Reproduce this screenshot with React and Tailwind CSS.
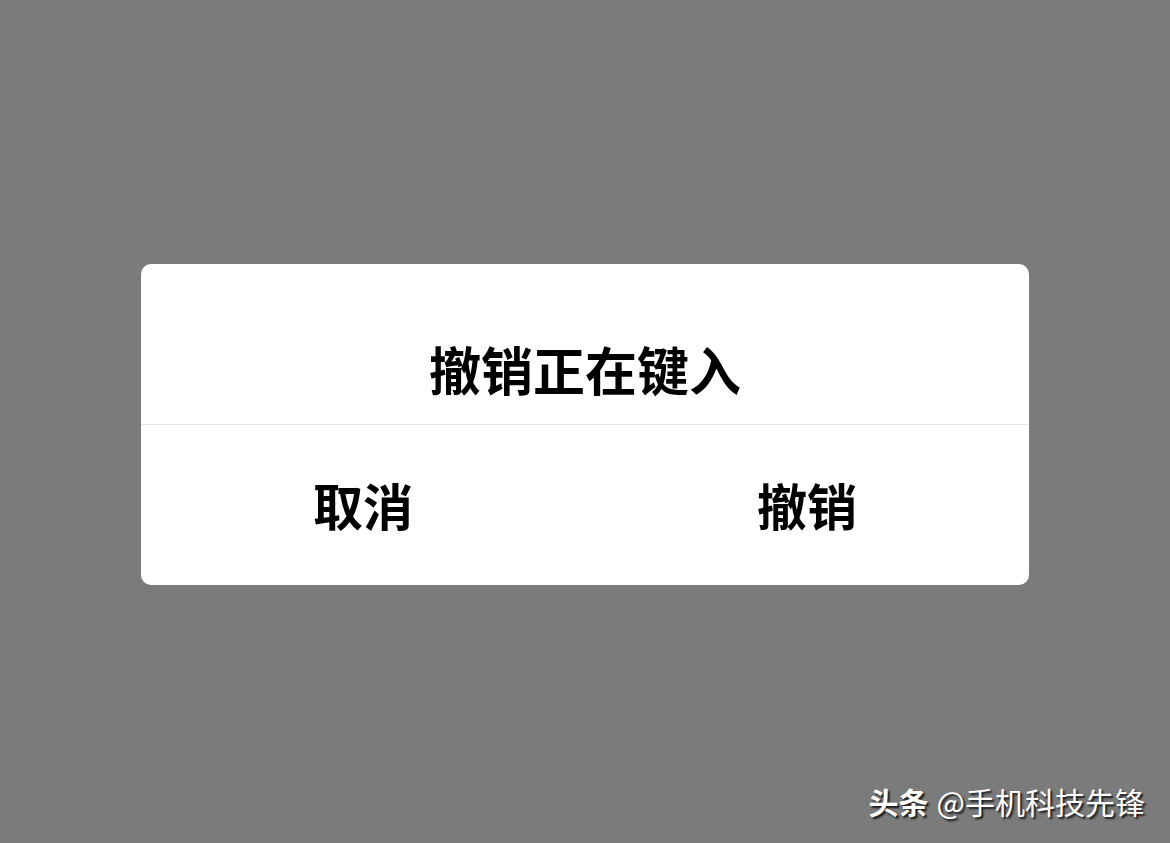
export default function App() {
    const cjk = { fontFamily: '"Noto Sans CJK SC", "Noto Sans", sans-serif' };

    return (
        <div className="relative w-[1170px] h-[843px] bg-[#7b7b7b] overflow-hidden" style={cjk}>
            {/* 撤销确认弹窗 */}
            <div className="flex h-full flex-col items-center pt-[264px]">
                <div className="w-[888px] rounded-[10px] bg-white overflow-hidden">
                    <div className="flex h-[161px] items-center justify-center border-b border-[#e6e6e6] pt-[50px]">
                        <h1 className="text-[52px] font-bold leading-none text-black">撤销正在键入</h1>
                    </div>
                    <div className="grid h-[160px] grid-cols-2">
                        <button className="flex items-center justify-center pb-[2px] text-[50px] font-bold leading-none text-black">取消</button>
                        <button className="flex items-center justify-center pb-[2px] text-[50px] font-bold leading-none text-black">撤销</button>
                    </div>
                </div>
            </div>

            {/* 水印 */}
            <div className="absolute right-[25px] bottom-[27px] flex items-baseline text-[30px] leading-none text-white [text-shadow:2px_2px_2px_rgba(0,0,0,0.8)]">
                <span className="font-bold">头条</span>
                <span className="ml-[8px]">@手机科技先锋</span>
            </div>
        </div>
    );
}
